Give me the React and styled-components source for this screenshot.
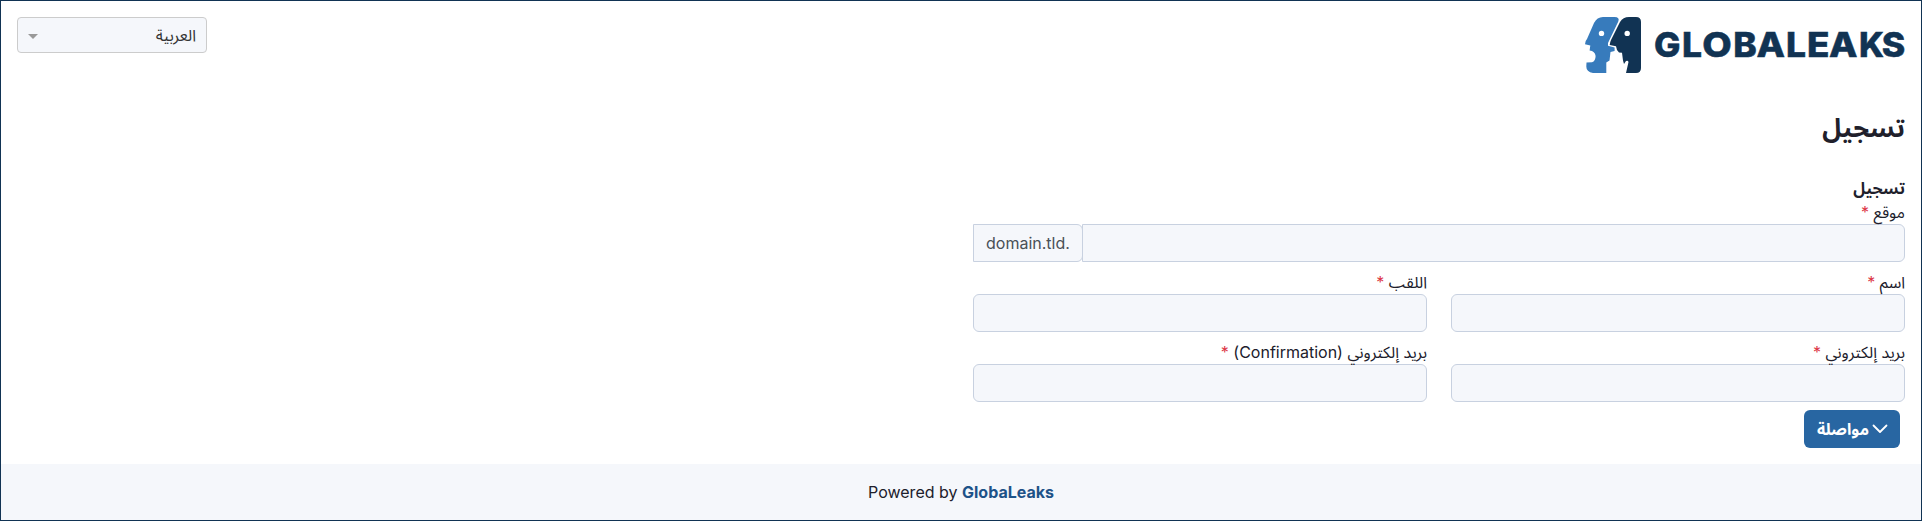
import React from "react";
import styled, { createGlobalStyle } from "styled-components";

const Global = createGlobalStyle`
  *, *::before, *::after { box-sizing: border-box; }
  body {
    margin: 0;
    background: #fff;
    color: #20202b;
    font: 400 16px/24px Inter, "Noto Sans Arabic", "Noto Sans", "DejaVu Sans", sans-serif;
  }
`;

const Page = styled.div`
  display: flex;
  flex-direction: column;
  height: 521px;
  border: 1px solid #113353;
`;

const Header = styled.header`
  display: flex;
  justify-content: space-between;
  align-items: flex-start;
  padding: 16px 16px 0;
`;

const Logo = styled.svg`
  display: block;
  width: 320px;
  height: 56px;
  overflow: visible;
`;

const LogoText = styled.text`
  font: 800 34px Inter, sans-serif;
  fill: #113353;
  stroke: #113353;
  stroke-width: 0.5px;
`;

const LanguageSelect = styled.button`
  display: flex;
  align-items: center;
  justify-content: space-between;
  width: 190px;
  height: 36px;
  padding: 0 10px;
  border: 1px solid #ccc;
  border-radius: 4px;
  background: #f5f7fb;
  color: #333;
  font: inherit;
`;

const Caret = styled.span`
  margin-top: 2px;
  border: 5px solid transparent;
  border-top-color: #999;
  border-bottom-width: 0;
`;

const Main = styled.main`
  flex: 1;
  padding: 33px 16px 0;
`;

const Title = styled.h1`
  margin: 0;
  font-size: 25.6px;
  line-height: 44px;
  font-weight: 700;
`;

const Form = styled.form`
  display: flex;
  flex-direction: column;
  width: 932px;
  margin-top: 25px;
`;

const SectionTitle = styled.h2`
  margin: 0;
  font-size: 16px;
  height: 25px;
  line-height: 26px;
  font-weight: 700;
`;

const Row = styled.div`
  display: grid;
  grid-template-columns: repeat(${(p) => p.$columns || 1}, 1fr);
  column-gap: 24px;
  margin-bottom: 8px;
`;

const Field = styled.div`
  display: flex;
  flex-direction: column;
`;

const Label = styled.label`
  position: relative;
  z-index: 1;
  height: 24px;
  white-space: nowrap;
`;

const Required = styled.span`
  color: #dc3545;
`;

const Input = styled.input`
  width: 100%;
  min-width: 0;
  height: 38px;
  padding: 6px 12px;
  border: 1px solid #c8d1e0;
  border-radius: 6px;
  background: #f5f7fb;
  font: inherit;
`;

const InputGroup = styled.div`
  display: flex;

  ${Input} {
    flex: 1;
    border-radius: 0 6px 6px 0;
  }
`;

const Suffix = styled.span`
  height: 38px;
  padding: 6px 12px;
  border: 1px solid #c8d1e0;
  border-radius: 0 6px 6px 0;
  margin-right: -1px;
  background: #f5f7fb;
  color: #495057;
`;

const NextButton = styled.button`
  display: flex;
  align-items: center;
  gap: 3px;
  align-self: flex-start;
  height: 38px;
  margin-right: 5px;
  padding: 0 12px 0 13px;
  border: 0;
  border-radius: 6px;
  background: #2866a2;
  color: #fff;
  font: inherit;
  font-weight: 700;
`;

const Footer = styled.footer`
  height: 56px;
  line-height: 56px;
  text-align: center;
  background: #f5f7fb;
`;

const FooterLink = styled.a`
  color: #1d5288;
  font-weight: 700;
  text-decoration: none;
`;

const LETTERS = [
  ["G", 70, 24.5],
  ["L", 98, 18],
  ["O", 118.2, 27.5],
  ["B", 149.3, 21.5],
  ["A", 172.4, 26.5],
  ["L", 202, 18],
  ["E", 223, 20.5],
  ["A", 245, 26.5],
  ["K", 275, 23],
  ["S", 297.8, 21.5],
];

function Brand() {
  return (
    <Logo viewBox="0 0 320 56" direction="ltr" aria-label="GlobaLeaks">
      <path
        fill="#377bbc"
        d="M18 0H29.500Q35 0 33.300 4.500L23 26V28.700L29.600 30.600V34L25.500 35L24.500 43.500L21.300 45.500V56H8Q1.300 55 1.300 49.600L1.500 45.600L7 45.300Q10.600 44 10.600 39Q10 34 4.600 33.500L5.300 28.600L0 27.300Q0 24 2 22L9 6Q12 0 18 0Z"
      />
      <path
        fill="#113353"
        d="M44 0H51Q56 0 56 5V51Q56 56 51 56H41L43.500 45Q43 43 41 44L39 47L38 43.500L37 35.700L34 35.500L32 33L31 29.300L24.700 28Q25 25 26 23L35 5Q38 0 44 0Z"
      />
      <circle cx="16.500" cy="16.400" r="2.700" fill="#fff" />
      <circle cx="42.200" cy="16.400" r="2.700" fill="#fff" />
      <LogoText y="40">
        {LETTERS.map(([letter, left, width]) => (
          <tspan key={left} x={left - 1} textLength={width + 2} lengthAdjust="spacingAndGlyphs">{letter}</tspan>
        ))}
      </LogoText>
    </Logo>
  );
}

function TextField({ label }) {
  return (
    <Field>
      <Label>{label} <Required>*</Required></Label>
      <Input />
    </Field>
  );
}

export default function App() {
  return (
    <Page dir="rtl">
      <Global />
      <Header>
        <Brand />
        <LanguageSelect type="button">العربية<Caret /></LanguageSelect>
      </Header>
      <Main>
        <Title>تسجيل</Title>
        <Form>
          <SectionTitle>تسجيل</SectionTitle>
          <Row>
            <Field>
              <Label>موقع <Required>*</Required></Label>
              <InputGroup>
                <Input />
                <Suffix dir="ltr">domain.tld.</Suffix>
              </InputGroup>
            </Field>
          </Row>
          <Row $columns={2}>
            <TextField label="اسم" />
            <TextField label="اللقب" />
          </Row>
          <Row $columns={2}>
            <TextField label="بريد إلكتروني" />
            <TextField label="بريد إلكتروني (Confirmation)" />
          </Row>
          <NextButton type="button">
            <svg width="16" height="16" viewBox="0 0 16 16" fill="none" stroke="#fff" strokeWidth="1.800" strokeLinecap="round" strokeLinejoin="round">
              <path d="M1.500 4.500L8 11L14.500 4.500" />
            </svg>
            مواصلة
          </NextButton>
        </Form>
      </Main>
      <Footer dir="ltr">
        Powered by <FooterLink>GlobaLeaks</FooterLink>
      </Footer>
    </Page>
  );
}
